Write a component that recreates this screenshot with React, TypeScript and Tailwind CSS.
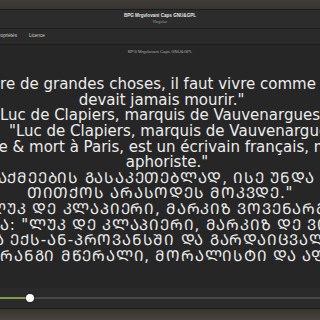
import React from 'react';

// lignes latines : texte + décalage éventuel (le rendu d'origine n'est pas parfaitement centré)
const latinLines: { text: string; pad?: string }[] = [
  { text: '"Pour faire de grandes choses, il faut vivre comme si on ne', pad: 'pr-[4px]' },
  { text: 'devait jamais mourir."', pad: 'pl-[3px]' },
  { text: 'Luc de Clapiers, marquis de Vauvenargues' },
  { text: '"Luc de Clapiers, marquis de Vauvenargues', pad: 'pl-[25px]' },
  { text: 'Provence & mort à Paris, est un écrivain français, moralis', pad: 'pr-[12px]' },
  { text: 'aphoriste."', pad: 'pl-[14px]' },
];

const georgianLines: { text: string; pad?: string }[] = [
  { text: 'ᲓᲘᲓᲘ ᲡᲐᲥᲛᲔᲔᲑᲘᲡ ᲒᲐᲡᲐᲙᲔᲗᲔᲑᲚᲐᲓ, ᲘᲡᲔ ᲣᲜᲓᲐ ᲪᲮᲝᲕᲠᲝ', pad: 'pl-[6px]' },
  { text: 'ᲗᲘᲗᲥᲝᲡ ᲐᲠᲐᲡᲝᲓᲔᲡ ᲛᲝᲙᲕᲓᲔ."' },
  { text: 'ᲚᲣᲙ ᲓᲔ ᲙᲚᲐᲞᲘᲔᲠᲘ, ᲛᲐᲠᲙᲘᲖ ᲕᲝᲕᲔᲜᲐᲠᲒᲘ', pad: 'pl-[6px]' },
  { text: 'ᲕᲘᲙᲘᲞᲔᲓᲘᲐ: "ᲚᲣᲙ ᲓᲔ ᲙᲚᲐᲞᲘᲔᲠᲘ, ᲛᲐᲠᲙᲘᲖ ᲓᲔ ᲕᲝᲕᲔᲜᲐᲠᲒᲘ' },
  { text: 'ᲓᲐᲘᲑᲐᲓᲐ ᲔᲥᲡ-ᲐᲜ-ᲞᲠᲝᲕᲐᲜᲡᲨᲘ ᲓᲐ ᲒᲐᲠᲓᲐᲘᲪᲕᲐᲚᲐ, ᲞᲐᲠᲘᲖ', pad: 'pl-[10px]' },
  { text: 'ᲐᲠᲘᲡ ᲤᲠᲐᲜᲒᲘ ᲛᲬᲔᲠᲐᲚᲘ, ᲛᲝᲠᲐᲚᲘᲡᲢᲘ ᲓᲐ ᲐᲤᲝᲠᲘᲡᲢᲘ.', pad: 'pl-[20px]' },
];

export default function App() {
  return (
    <div className="flex h-[320px] w-[320px] flex-col overflow-hidden bg-[#262626] font-['Liberation_Sans',sans-serif]">
      {/* barre du haut */}
      <div className="h-[9px] shrink-0 bg-gradient-to-b from-[#403d39] to-[#36342f]" />

      {/* en-tête */}
      <header className="flex h-[19px] shrink-0 flex-col items-center justify-center border-t border-[#1c1c1c] bg-[#2c2c2c] leading-none">
        <span className="text-[4.6px] font-bold text-[#e4e4e4]">BPG Mrgvlovani Caps GNU&amp;GPL</span>
        <span className="mt-[1px] text-[4px] text-[#9a9a9a]">Regular</span>
      </header>

      {/* onglets */}
      <nav className="flex h-[17px] shrink-0 items-center gap-[12px] border-y border-[#1e1e1e] bg-[#2a2a2a] text-[4.6px] leading-none text-[#cfcfcf]">
        <span className="-ml-[4px]">Propriétés</span>
        <span>Licence</span>
      </nav>

      {/* aperçu */}
      <main className="flex min-h-0 flex-1 flex-col overflow-hidden">
        <p className="mt-[5px] text-center text-[4.3px] leading-none text-[#a8a8a8]">BPG Mrgvlovani Caps GNU&amp;GPL</p>
        <div className="mt-[23px] flex flex-col font-['DejaVu_Sans',sans-serif] leading-[15.6px] text-[#ececec]">
          {latinLines.map((line, i) => (
            <div key={i} className={`flex justify-center whitespace-nowrap text-[15px] ${line.pad ?? ''}`}>
              <span>{line.text}</span>
            </div>
          ))}
          {georgianLines.map((line, i) => (
            <div key={'ka' + i} className={`flex justify-center whitespace-nowrap text-[15px] tracking-[0.8px] ${line.pad ?? ''}`}>
              <span>{line.text}</span>
            </div>
          ))}
        </div>
      </main>

      {/* curseur de taille */}
      <div className="flex h-[20px] shrink-0 items-center bg-[#2a2a2a]">
        <div className="relative h-[2px] w-full bg-[#484848]">
          <div className="h-full w-[30px] bg-[#7f9a4a]" />
          <div className="absolute left-[26px] top-1/2 h-[8px] w-[8px] -translate-y-1/2 rounded-full bg-white shadow-[0_0_2px_rgba(0,0,0,0.6)]" />
        </div>
      </div>

      {/* bas */}
      <div className="h-[12px] shrink-0 border-t border-[#1c1c1c] bg-gradient-to-b from-[#38352f] to-[#46433e]" />
    </div>
  );
}
